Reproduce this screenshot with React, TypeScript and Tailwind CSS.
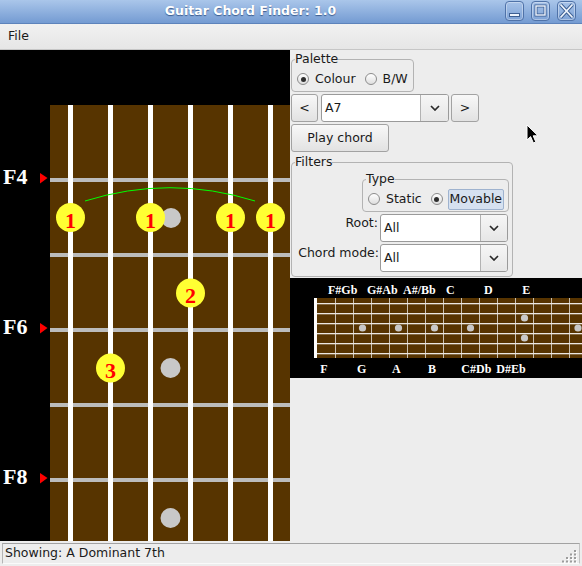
import React from "react";

const STRINGS = [68, 108, 148, 188, 228, 268];
const FRETS = [128, 203, 278, 353, 428];

const FINGERS = [
  { x: 70.5, y: 167.5, n: "1" },
  { x: 150.5, y: 167.5, n: "1" },
  { x: 230.5, y: 167.5, n: "1" },
  { x: 270.5, y: 167.5, n: "1" },
  { x: 190.5, y: 243, n: "2" },
  { x: 110.5, y: 318, n: "3" },
];

const LABELS = [
  { y: 128, name: "F4" },
  { y: 278, name: "F6" },
  { y: 428, name: "F8" },
];

const serif = "'Liberation Serif', 'Times New Roman', serif";

const Fretboard = () => (
  <svg width="290" height="491" className="block">
    <rect width="290" height="491" fill="#000" />
    <rect x="50" y="55" width="240" height="436" fill="#573400" />
    {FRETS.map((y) => (
      <rect key={y} x="50" y={y} width="240" height="4" fill="#bcbcbc" />
    ))}
    {STRINGS.map((x) => (
      <rect key={x} x={x} y="55" width="5" height="436" fill="#fff" shapeRendering="crispEdges" />
    ))}
    {/* inlays */}
    <circle cx="171" cy="168" r="10" fill="#c8c8c8" />
    <circle cx="170.5" cy="318" r="10" fill="#c8c8c8" />
    <circle cx="170.5" cy="468" r="10" fill="#c8c8c8" />
    {/* barre */}
    <path d="M85 151 Q170 124.4 255 151" fill="none" stroke="#00ff00" strokeWidth="1" />
    {FINGERS.map((f, i) => (
      <g key={i}>
        <circle cx={f.x} cy={f.y} r="14.5" fill="#ffff33" />
        <text
          x={f.x}
          y={f.y + 10}
          textAnchor="middle"
          fill="#ff0000"
          fontFamily={serif}
          fontWeight="bold"
          fontSize="22"
        >
          {f.n}
        </text>
      </g>
    ))}
    {LABELS.map((l) => (
      <g key={l.name}>
        <text x="3" y={l.y + 6} fill="#fff" fontFamily={serif} fontWeight="bold" fontSize="22">
          {l.name}
        </text>
        <polygon points={`40,${l.y - 5} 47.5,${l.y} 40,${l.y + 5.5}`} fill="#ff0000" />
      </g>
    ))}
  </svg>
);

const MINI_TOP = [
  { x: 38, t: "F#Gb" },
  { x: 77, t: "G#Ab" },
  { x: 113, t: "A#/Bb" },
  { x: 156, t: "C" },
  { x: 194, t: "D" },
  { x: 232.3, t: "E" },
];
const MINI_BOTTOM = [
  { x: 30.3, t: "F" },
  { x: 67, t: "G" },
  { x: 102, t: "A" },
  { x: 138, t: "B" },
  { x: 171.3, t: "C#Db" },
  { x: 206.3, t: "D#Eb" },
];
const MINI_DOTS = [
  [72.5, 50],
  [108.5, 50],
  [144.5, 50],
  [180.5, 50],
  [288, 50],
  [234.5, 40],
  [234.5, 60],
];

const MiniBoard = () => (
  <svg width="292" height="100" className="block">
    <rect width="292" height="100" fill="#000" />
    <rect x="24" y="20" width="268" height="60" fill="#573400" />
    {Array.from({ length: 14 }, (_, k) => (
      <rect key={k} x={45 + 18 * k} y="20" width="1" height="60" fill="#c9c1b3" />
    ))}
    {[25, 35, 45, 55, 65, 75].map((y) => (
      <rect key={y} x="24" y={y} width="268" height="1.3" fill="#ece8e2" />
    ))}
    <rect x="24" y="20" width="3" height="60" fill="#fff" />
    {MINI_DOTS.map(([x, y], i) => (
      <circle key={i} cx={x} cy={y} r="3.6" fill="#c8c8c8" />
    ))}
    {MINI_TOP.map((l) => (
      <text key={l.t} x={l.x} y="15.5" fill="#fff" fontFamily={serif} fontWeight="bold" fontSize="12">
        {l.t}
      </text>
    ))}
    {MINI_BOTTOM.map((l) => (
      <text key={l.t} x={l.x} y="95.3" fill="#fff" fontFamily={serif} fontWeight="bold" fontSize="12">
        {l.t}
      </text>
    ))}
  </svg>
);

const Radio = ({ checked }: { checked?: boolean }) => (
  <span className="flex items-center justify-center w-[12px] h-[12px] rounded-full border border-[#8c8c8c] bg-linear-to-b from-white to-[#dedede] shrink-0">
    {checked && <span className="w-[5px] h-[5px] rounded-full bg-[#2e2e2e]" />}
  </span>
);

const Chevron = () => (
  <svg width="10" height="6" viewBox="0 0 10 6">
    <path d="M1 1L5 5L9 1" fill="none" stroke="#2a2a2a" strokeWidth="1.7" />
  </svg>
);

const Combo = ({ value, width, arrow }: { value: string; width: string; arrow: string }) => (
  <div className={`flex h-[28px] ${width} rounded-[3px] border border-[#9a9a9a] bg-white overflow-hidden`}>
    <div className="flex-1 flex items-center pl-[3px]">{value}</div>
    <div
      className={`${arrow} flex items-center justify-center border-l border-[#b2b2b2] bg-linear-to-b from-[#f6f6f6] to-[#e6e6e6]`}
    >
      <Chevron />
    </div>
  </div>
);

const btn =
  "h-[28px] rounded-[3px] border border-[#a2a2a2] bg-linear-to-b from-[#f8f8f8] to-[#e2e2e2] flex items-center justify-center";

const WinButton = ({ children }: { children: React.ReactNode }) => (
  <div className="w-[19px] h-[20px] rounded-[4px] border border-[#4f72a8] bg-linear-to-b from-[#a6c2e8] to-[#7fa3d6] shadow-[inset_0_0_0_1px_rgba(255,255,255,0.35)]">
    <svg width="17" height="18" viewBox="0 0 17 18" className="block">
      {children}
    </svg>
  </div>
);

export default function App() {
  return (
    <div className="relative w-[582px] h-[566px] flex flex-col bg-[#ededed] overflow-hidden text-[12.5px] text-[#1a1a1a] font-['DejaVu_Sans','Liberation_Sans',sans-serif]">
      {/* Title bar */}
      <div className="h-[24px] flex items-start bg-linear-to-b from-[#aac6ea] to-[#749bd2] border-b border-[#5d83bb] pr-[6px]">
        <div className="flex-1 pr-[4px] h-full flex items-center justify-center font-bold text-white [text-shadow:0_1px_1px_#3b5c8f]">
          Guitar Chord Finder: 1.0
        </div>
        <div className="flex gap-[7px] pt-[1px]">
          <WinButton>
            <rect x="3.5" y="11.5" width="10" height="3" fill="#eef4fc" stroke="#3d5f93" strokeWidth="1" />
          </WinButton>
          <WinButton>
            <rect x="4" y="4" width="9" height="9" fill="none" stroke="#3d5f93" strokeWidth="3" />
            <rect x="4" y="4" width="9" height="9" fill="none" stroke="#eef4fc" strokeWidth="1.4" />
          </WinButton>
          <WinButton>
            <path d="M2.5 2.5L14.5 15.5M14.5 2.5L2.5 15.5" stroke="#3d5f93" strokeWidth="3.6" />
            <path d="M2.5 2.5L14.5 15.5M14.5 2.5L2.5 15.5" stroke="#eef4fc" strokeWidth="1.8" />
          </WinButton>
        </div>
      </div>

      {/* Menu bar */}
      <div className="h-[26px] flex items-center px-[8px] bg-linear-to-b from-[#f1f1f1] to-[#e6e6e6] border-b border-[#c6c6c6]">
        File
      </div>

      {/* Main */}
      <div className="h-[491px] flex">
        <div className="w-[290px] shrink-0">
          <Fretboard />
        </div>
        <div className="w-[292px] flex flex-col">
          <fieldset className="mt-[1px] ml-[1px] w-[120px] border border-[#b3b3b3] rounded-[4px] px-[5px] pb-0">
            <legend className="-ml-[2px] px-0 leading-[16px]">Palette</legend>
            <div className="h-[24px] flex items-center">
              <Radio checked />
              <span className="ml-[6px]">Colour</span>
              <span className="ml-[9px]">
                <Radio />
              </span>
              <span className="ml-[6px]">B/W</span>
            </div>
          </fieldset>

          <div className="mt-[2px] ml-[1px] flex">
            <div className={`${btn} w-[27px]`}>&lt;</div>
            <div className="ml-[3px]">
              <Combo value="A7" width="w-[128px]" arrow="w-[28px]" />
            </div>
            <div className={`${btn} w-[28px] ml-[2px]`}>&gt;</div>
          </div>

          <div className={`${btn} mt-[2px] ml-[1px] w-[98px]`}>Play chord</div>

          <fieldset className="mt-[2px] ml-[1px] w-[222px] border border-[#b3b3b3] rounded-[4px] pl-[3px] pr-[4px] pb-[4px]">
            <legend className="px-0 leading-[16px]">Filters</legend>
            <div className="flex justify-end -mr-[1px]">
              <fieldset className="mt-[1px] w-[147px] border border-[#b3b3b3] rounded-[4px] pl-[5px] pr-[2px] pb-0">
                <legend className="-ml-[2px] px-0 leading-[16px]">Type</legend>
                <div className="h-[24px] flex items-center">
                  <Radio />
                  <span className="ml-[6px]">Static</span>
                  <span className="ml-[9px]">
                    <Radio checked />
                  </span>
                  <span className="ml-[5px] h-[21px] w-[56px] flex items-center justify-center rounded-[2px] border border-[#9fb3cf] bg-[#d6e1f0]">
                    Movable
                  </span>
                </div>
              </fieldset>
            </div>
            <div className="mt-[2px] grid grid-cols-[85px_128px] gap-y-[2px]">
              <div className="leading-[16px] text-right pr-[2px] pt-[1px]">Root:</div>
              <Combo value="All" width="w-[128px]" arrow="w-[27px]" />
              <div className="leading-[16px] text-right pr-[1px] pt-[1px] whitespace-nowrap">Chord mode:</div>
              <Combo value="All" width="w-[128px]" arrow="w-[27px]" />
            </div>
          </fieldset>

          <div className="mt-[1px]">
            <MiniBoard />
          </div>
        </div>
      </div>

      {/* Status bar */}
      <div className="relative h-[25px] px-[2px] pt-[2px]">
        <div className="h-[21px] flex items-center pl-[2px] border border-t-[#a2a2a2] border-l-[#b4b4b4] border-r-[#c4c4c4] border-b-[#fafafa]">
          Showing: A Dominant 7th
        </div>
        <svg width="16" height="14" className="absolute right-[4px] bottom-[3px]">
          {[
            [12, 1],
            [8, 4.5],
            [12, 4.5],
            [4, 8],
            [8, 8],
            [12, 8],
            [0, 11.5],
            [4, 11.5],
            [8, 11.5],
            [12, 11.5],
          ].map(([x, y], i) => (
            <g key={i}>
              <rect x={x + 1} y={y + 1} width="2" height="2" fill="#fff" />
              <rect x={x} y={y} width="2" height="2" fill="#9c9c9c" />
            </g>
          ))}
        </svg>
      </div>

      {/* mouse cursor */}
      <svg width="14" height="21" viewBox="0 0 14 21" className="absolute left-[526px] top-[124px]">
        <path
          d="M1 1L1 16L4.6 12.6L7.4 19L9.8 17.9L7.2 11.8L12 11.8Z"
          fill="#000"
          stroke="#fff"
          strokeWidth="1"
          strokeLinejoin="round"
        />
      </svg>
    </div>
  );
}
